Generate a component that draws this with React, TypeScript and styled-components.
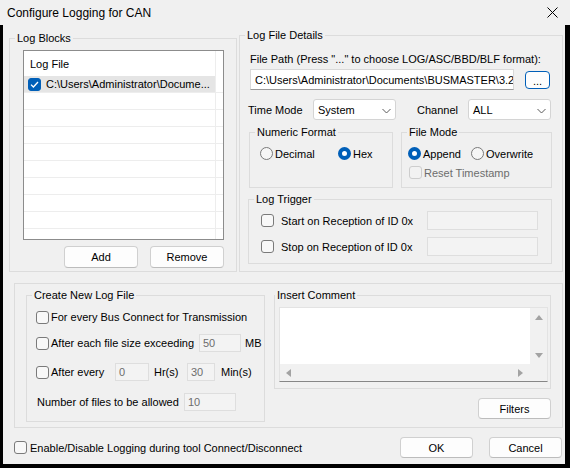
import styled, { createGlobalStyle } from "styled-components";

const GlobalStyle = createGlobalStyle`
  html, body {
    margin: 0;
    padding: 0;
    background: #000;
  }
  body {
    font-family: "Liberation Sans", Arial, sans-serif;
    font-size: 11px;
    color: #000;
  }
`;

const Window = styled.div`
  width: 570px;
  height: 468px;
  display: flex;
  flex-direction: column;
  background: #000;
  overflow: hidden;
`;

const TitleBar = styled.div`
  height: 25px;
  flex: none;
  display: flex;
  align-items: center;
  justify-content: space-between;
  padding-left: 7px;
  background: #f0f0f0;
`;

const TitleText = styled.span`
  font-size: 12px;
`;

const CloseButton = styled.div`
  width: 36px;
  height: 25px;
  display: flex;
  align-items: center;
  justify-content: center;
`;

const Client = styled.div`
  flex: 1;
  margin: 0 5px 4px 3px;
  padding-top: 10px;
  background: #f0f0f0;
  display: flex;
  flex-direction: column;
`;

const TopRow = styled.div`
  display: flex;
  align-items: flex-end;
  gap: 2px;
  padding-left: 6px;
`;

const Group = styled.div<{ $w: number; $h: number; $pad?: string; $mt?: number }>`
  position: relative;
  box-sizing: border-box;
  flex: none;
  width: ${(p) => p.$w}px;
  height: ${(p) => p.$h}px;
  margin-top: ${(p) => p.$mt ?? 0}px;
  border: 1px solid #dcdcdc;
  padding: ${(p) => p.$pad || "0"};
  display: flex;
  flex-direction: column;
`;

const Caption = styled.span<{ $left?: number }>`
  position: absolute;
  top: -8px;
  left: ${(p) => (p.$left ?? 5)}px;
  padding: 0 2px;
  line-height: 15px;
  background: #f0f0f0;
  white-space: nowrap;
`;

const ListBox = styled.div`
  box-sizing: border-box;
  width: 201px;
  height: 190px;
  border: 1px solid #8c8c8c;
  background: #fff;
  overflow: hidden;
`;

const ListHeader = styled.div`
  height: 25px;
  display: flex;
`;

const ListRow = styled.div`
  box-sizing: border-box;
  height: 17px;
  border-bottom: 1px solid #ededed;
  display: flex;
`;

const ListCell = styled.div<{ $selected?: boolean; $pad?: number }>`
  box-sizing: border-box;
  width: 192px;
  height: 100%;
  border-right: 1px solid #ededed;
  display: flex;
  align-items: center;
  padding-left: ${(p) => p.$pad ?? 4}px;
  background: ${(p) => (p.$selected ? "#e5e5e5" : "transparent")};
  white-space: nowrap;
  overflow: hidden;
`;

const CellText = styled.span`
  margin-left: 5px;
`;

const ButtonRow = styled.div`
  display: flex;
  justify-content: flex-end;
  gap: 12px;
  margin-top: 6px;
`;

const Button = styled.div<{ $w: number; $h: number; $focus?: boolean; $ml?: number }>`
  box-sizing: border-box;
  width: ${(p) => p.$w}px;
  height: ${(p) => p.$h}px;
  margin-left: ${(p) => p.$ml ?? 0}px;
  flex: none;
  display: flex;
  align-items: center;
  justify-content: center;
  background: #fdfdfd;
  border: 1px solid ${(p) => (p.$focus ? "#005fb8" : "#d0d0d0")};
  border-bottom-color: ${(p) => (p.$focus ? "#005fb8" : "#bcbcbc")};
  border-radius: 4px;
`;

const PathLabel = styled.div`
  margin-left: 2px;
  height: 15px;
  line-height: 15px;
  white-space: nowrap;
`;

const PathRow = styled.div`
  display: flex;
  align-items: flex-start;
  margin: 2px 0 0 2px;
`;

const Edit = styled.div<{ $w: number; $h: number; $disabled?: boolean }>`
  box-sizing: border-box;
  flex: none;
  width: ${(p) => p.$w}px;
  height: ${(p) => p.$h}px;
  display: flex;
  align-items: center;
  padding-left: ${(p) => (p.$disabled ? 3 : 4)}px;
  white-space: nowrap;
  overflow: hidden;
  background: ${(p) => (p.$disabled ? "#f3f3f3" : "#fff")};
  color: ${(p) => (p.$disabled ? "#6d6d6d" : "#000")};
  border: 1px solid ${(p) => (p.$disabled ? "#dedede" : "#d9d9d9")};
  border-bottom-color: ${(p) => (p.$disabled ? "#dedede" : "#9a9a9a")};
`;

const EditText = styled.span`
  overflow: hidden;
  white-space: nowrap;
`;

const DotsButton = styled(Button)`
  margin: 2px 0 0 11px;
  padding-top: 2px;
`;

const FieldRow = styled.div<{ $mt: number; $h: number; $ml?: number }>`
  display: flex;
  align-items: center;
  height: ${(p) => p.$h}px;
  margin-top: ${(p) => p.$mt}px;
  margin-left: ${(p) => p.$ml ?? 0}px;
  white-space: nowrap;
`;

const Label = styled.span<{ $w?: number; $ml?: number }>`
  flex: none;
  width: ${(p) => (p.$w ? `${p.$w}px` : "auto")};
  margin-left: ${(p) => p.$ml ?? 0}px;
`;

const Combo = styled.div<{ $w: number }>`
  box-sizing: border-box;
  flex: none;
  width: ${(p) => p.$w}px;
  height: 21px;
  display: flex;
  align-items: center;
  justify-content: space-between;
  padding: 0 4px 0 4px;
  background: #fff;
  border: 1px solid #d4d4d4;
  border-radius: 3px;
`;

const GroupRow = styled.div`
  display: flex;
  gap: 8px;
  margin: 12px 0 0 1px;
`;

const Option = styled.div<{ $w?: number }>`
  display: flex;
  align-items: center;
  gap: 2px;
  width: ${(p) => (p.$w ? `${p.$w}px` : "auto")};
  height: 13px;
  flex: none;
  white-space: nowrap;
`;

const OptionLine = styled.div<{ $mt?: number; $ml?: number }>`
  display: flex;
  margin-top: ${(p) => p.$mt ?? 0}px;
  margin-left: ${(p) => p.$ml ?? 0}px;
`;

const RadioDot = styled.span<{ $checked?: boolean }>`
  box-sizing: border-box;
  flex: none;
  width: 13px;
  height: 13px;
  border-radius: 50%;
  background: ${(p) => (p.$checked ? "#fff" : "#f6f6f6")};
  border: ${(p) => (p.$checked ? "4px solid #005fb8" : "1px solid #7a7a7a")};
`;

const Box = styled.span<{ $checked?: boolean; $disabled?: boolean }>`
  box-sizing: border-box;
  flex: none;
  width: 13px;
  height: 13px;
  border-radius: 3px;
  display: flex;
  align-items: center;
  justify-content: center;
  background: ${(p) => (p.$checked ? "#005fb8" : p.$disabled ? "#f2f2f2" : "#f8f8f8")};
  border: 1px solid
    ${(p) => (p.$checked ? "#005fb8" : p.$disabled ? "#cdcdcd" : "#7a7a7a")};
`;

const Dim = styled.span`
  color: #6d6d6d;
`;

const BottomGroup = styled(Group)`
  flex-direction: row;
  gap: 9px;
  margin: 11px 0 0 11px;
`;

const RightCol = styled.div`
  display: flex;
  flex-direction: column;
  align-items: flex-end;
  gap: 9px;
`;

const CommentBox = styled.div`
  box-sizing: border-box;
  width: 269px;
  height: 75px;
  display: grid;
  grid-template-columns: 1fr 17px;
  grid-template-rows: 1fr 17px;
  border: 1px solid #e3e3e3;
  border-bottom-color: #868686;
  background: #f1f1f1;
`;

const CommentText = styled.div`
  background: #fff;
`;

const VScroll = styled.div`
  display: flex;
  flex-direction: column;
  align-items: center;
  justify-content: space-between;
  padding: 7px 0 6px;
`;

const HScroll = styled.div`
  display: flex;
  align-items: center;
  justify-content: space-between;
  padding: 0 7px 0 6px;
`;

const FooterRow = styled.div`
  display: flex;
  align-items: center;
  height: 21px;
  margin-top: 9px;
  padding: 0 3px 0 11px;
  white-space: nowrap;
`;

const Spacer = styled.div`
  flex: 1;
`;

function CheckBox({ checked, disabled }: { checked?: boolean; disabled?: boolean }) {
  return (
    <Box $checked={checked} $disabled={disabled}>
      {checked && (
        <svg width="9" height="7" viewBox="0 0 9 7">
          <path d="M1 3.6 L3.4 6 L8 1" fill="none" stroke="#fff" strokeWidth="1.3" />
        </svg>
      )}
    </Box>
  );
}

function Chevron() {
  return (
    <svg width="9" height="6" viewBox="0 0 9 6" style={{ marginTop: 2 }}>
      <path d="M0.5 1 L4.5 5 L8.5 1" fill="none" stroke="#5a5a5a" strokeWidth="1" />
    </svg>
  );
}

function Arrow({ dir }: { dir: "up" | "down" | "left" | "right" }) {
  const pts = {
    up: "0,5 4,0 8,5",
    down: "0,0 8,0 4,5",
    left: "5,0 5,8 0,4",
    right: "0,0 5,4 0,8",
  }[dir];
  const horiz = dir === "left" || dir === "right";
  return (
    <svg width={horiz ? 5 : 8} height={horiz ? 8 : 5}>
      <polygon points={pts} fill="#a3a3a3" />
    </svg>
  );
}

export default function App() {
  const emptyRows = Array.from({ length: 9 });

  return (
    <Window>
      <GlobalStyle />
      <TitleBar>
        <TitleText>Configure Logging for CAN</TitleText>
        <CloseButton>
          <svg width="11" height="11" viewBox="0 0 11 11">
            <path d="M0.5 0.5 L10.5 10.5 M10.5 0.5 L0.5 10.5" stroke="#000" strokeWidth="1" />
          </svg>
        </CloseButton>
      </TitleBar>

      <Client>
        <TopRow>
          <Group $w={228} $h={234} $pad="11px 12px 0 13px">
            <Caption>Log Blocks</Caption>
            <ListBox>
              <ListHeader>
                <ListCell $pad={6}>Log File</ListCell>
              </ListHeader>
              <ListRow>
                <ListCell $selected>
                  <CheckBox checked />
                  <CellText>C:\Users\Administrator\Docume...</CellText>
                </ListCell>
              </ListRow>
              {emptyRows.map((_, i) => (
                <ListRow key={i}>
                  <ListCell />
                </ListRow>
              ))}
            </ListBox>
            <ButtonRow>
              <Button $w={74} $h={22}>Add</Button>
              <Button $w={74} $h={22}>Remove</Button>
            </ButtonRow>
          </Group>

          <Group $w={324} $h={237} $pad="16px 0 0 8px">
            <Caption>Log File Details</Caption>
            <PathLabel>File Path (Press "..." to choose LOG/ASC/BBD/BLF format):</PathLabel>
            <PathRow>
              <Edit $w={264} $h={21}>
                <EditText>C:\Users\Administrator\Documents\BUSMASTER\3.2.</EditText>
              </Edit>
              <DotsButton $w={25} $h={18} $focus>...</DotsButton>
            </PathRow>
            <FieldRow $mt={9} $h={21}>
              <Label $w={65}>Time Mode</Label>
              <Combo $w={83}>
                System
                <Chevron />
              </Combo>
              <Label $w={51} $ml={21}>Channel</Label>
              <Combo $w={83}>
                ALL
                <Chevron />
              </Combo>
            </FieldRow>
            <GroupRow>
              <Group $w={144} $h={56} $pad="14px 0 0 10px">
                <Caption>Numeric Format</Caption>
                <OptionLine>
                  <Option $w={78}>
                    <RadioDot />
                    Decimal
                  </Option>
                  <Option>
                    <RadioDot $checked />
                    Hex
                  </Option>
                </OptionLine>
              </Group>
              <Group $w={151} $h={56} $pad="14px 0 0 6px">
                <Caption>File Mode</Caption>
                <OptionLine>
                  <Option $w={63}>
                    <RadioDot $checked />
                    Append
                  </Option>
                  <Option>
                    <RadioDot />
                    Overwrite
                  </Option>
                </OptionLine>
                <OptionLine $mt={6} $ml={1}>
                  <Option>
                    <CheckBox disabled />
                    <Dim>Reset Timestamp</Dim>
                  </Option>
                </OptionLine>
              </Group>
            </GroupRow>
            <Group $w={304} $h={65} $pad="11px 0 0 12px" $mt={11}>
              <Caption>Log Trigger</Caption>
              <FieldRow $mt={0} $h={19}>
                <CheckBox />
                <Label $w={146} $ml={7}>Start on Reception of ID 0x</Label>
                <Edit $w={111} $h={19} $disabled />
              </FieldRow>
              <FieldRow $mt={7} $h={19}>
                <CheckBox />
                <Label $w={146} $ml={7}>Stop on Reception of ID 0x</Label>
                <Edit $w={111} $h={19} $disabled />
              </FieldRow>
            </Group>
          </Group>
        </TopRow>

        <BottomGroup $w={549} $h={145} $pad="11px 0 0 11px">
          <Group $w={239} $h={127} $pad="12px 0 0 9px">
            <Caption>Create New Log File</Caption>
            <FieldRow $mt={0} $h={18}>
              <CheckBox />
              <Label $ml={2}>For every Bus Connect for Transmission</Label>
            </FieldRow>
            <FieldRow $mt={8} $h={18}>
              <CheckBox />
              <Label $w={148} $ml={2}>After each file size exceeding</Label>
              <Edit $w={42} $h={18} $disabled>50</Edit>
              <Label $ml={4}>MB</Label>
            </FieldRow>
            <FieldRow $mt={11} $h={18}>
              <CheckBox />
              <Label $w={64} $ml={2}>After every</Label>
              <Edit $w={34} $h={18} $disabled>0</Edit>
              <Label $w={33} $ml={5}>Hr(s)</Label>
              <Edit $w={28} $h={18} $disabled>30</Edit>
              <Label $ml={6}>Min(s)</Label>
            </FieldRow>
            <FieldRow $mt={12} $h={18} $ml={1}>
              <Label $w={147}>Number of files to be allowed</Label>
              <Edit $w={52} $h={18} $disabled>10</Edit>
            </FieldRow>
          </Group>
          <RightCol>
            <Group $w={277} $h={94} $pad="11px 0 0 4px">
              <Caption $left={0}>Insert Comment</Caption>
              <CommentBox>
                <CommentText />
                <VScroll>
                  <Arrow dir="up" />
                  <Arrow dir="down" />
                </VScroll>
                <HScroll>
                  <Arrow dir="left" />
                  <Arrow dir="right" />
                </HScroll>
              </CommentBox>
            </Group>
            <Button $w={73} $h={21}>Filters</Button>
          </RightCol>
        </BottomGroup>

        <FooterRow>
          <CheckBox />
          <Label $ml={3}>Enable/Disable Logging during tool Connect/Disconnect</Label>
          <Spacer />
          <Button $w={73} $h={21}>OK</Button>
          <Button $w={73} $h={21} $ml={16}>Cancel</Button>
        </FooterRow>
      </Client>
    </Window>
  );
}
